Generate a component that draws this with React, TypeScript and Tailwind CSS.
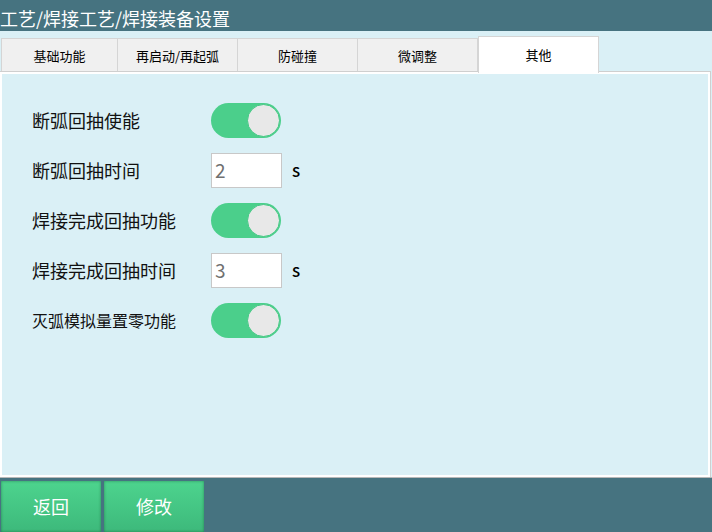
import React from "react";

const font = { fontFamily: '"Noto Sans CJK SC", "Noto Sans", sans-serif' };

function Toggle() {
  return (
    <div className="relative h-[35px] w-[70px] rounded-full bg-[#4bcf8b]">
      <div className="absolute right-[1px] top-[1px] h-[33px] w-[33px] rounded-full border border-[#43c884] bg-[#e8e8e8]" />
    </div>
  );
}

function NumInput({ value }: { value: string }) {
  return (
    <div className="flex items-center gap-[10px]">
      <div className="flex h-[35px] w-[71px] items-center border border-[#c8c8c8] bg-white pl-[3px] text-[19px] text-[#707070]">
        {value}
      </div>
      <span className="text-[17px] font-medium text-black">s</span>
    </div>
  );
}

function Row({ label, small, children }: { label: string; small?: boolean; children: React.ReactNode }) {
  return (
    <div className="flex h-[50px] items-center">
      <div className={`w-[179px] text-[#111] ${small ? "text-[16px]" : "text-[18px]"}`}>{label}</div>
      {children}
    </div>
  );
}

export default function App() {
  const tabs = ["基础功能", "再启动/再起弧", "防碰撞", "微调整"];
  return (
    <div className="flex h-[532px] w-[712px] flex-col overflow-hidden bg-[#daf0f6]" style={font}>
      <div className="flex h-[31px] items-end bg-[#467380] pb-[1px] text-[18px] leading-[24px] text-white">
        工艺/焊接工艺/焊接装备设置
      </div>
      <div className="flex h-[40px] items-end pl-[1px]">
        {tabs.map((t, i) => (
          <div
            key={t}
            className={`flex h-[33px] items-center justify-center border-t border-r border-[#d5d5d5] bg-[#f0f0f0] pt-[2px] text-[13px] text-black ${
              i === 0 ? "w-[117px] border-l" : "w-[120px]"
            }`}
          >
            {t}
          </div>
        ))}
        <div className="relative z-10 -mb-[2px] flex h-[37px] w-[121px] items-center justify-center border-x border-t border-[#d5d5d5] bg-white pb-[1px] text-[13px] text-black">
          其他
        </div>
      </div>
      <div className="mr-[1px] flex-1 border-t border-r border-[#cfcfcf]">
        <div className="h-full border-2 border-white pl-[30px] pt-[21px]">
          <Row label="断弧回抽使能">
            <Toggle />
          </Row>
          <Row label="断弧回抽时间">
            <NumInput value="2" />
          </Row>
          <Row label="焊接完成回抽功能">
            <Toggle />
          </Row>
          <Row label="焊接完成回抽时间">
            <NumInput value="3" />
          </Row>
          <Row label="灭弧模拟量置零功能" small>
            <Toggle />
          </Row>
        </div>
      </div>
      <div className="h-[1px] bg-[#b8b8b8]" />
      <div className="flex h-[54px] gap-[3px] bg-[#467380] pl-[1px] pt-[3px]">
        {["返回", "修改"].map((b) => (
          <div
            key={b}
            className="flex h-[51px] w-[100px] items-center justify-center bg-gradient-to-b from-[#4dd48e] to-[#3db97b] text-[18px] text-white shadow-[inset_0_0_3px_rgba(0,60,30,0.45)]"
          >
            {b}
          </div>
        ))}
      </div>
    </div>
  );
}
